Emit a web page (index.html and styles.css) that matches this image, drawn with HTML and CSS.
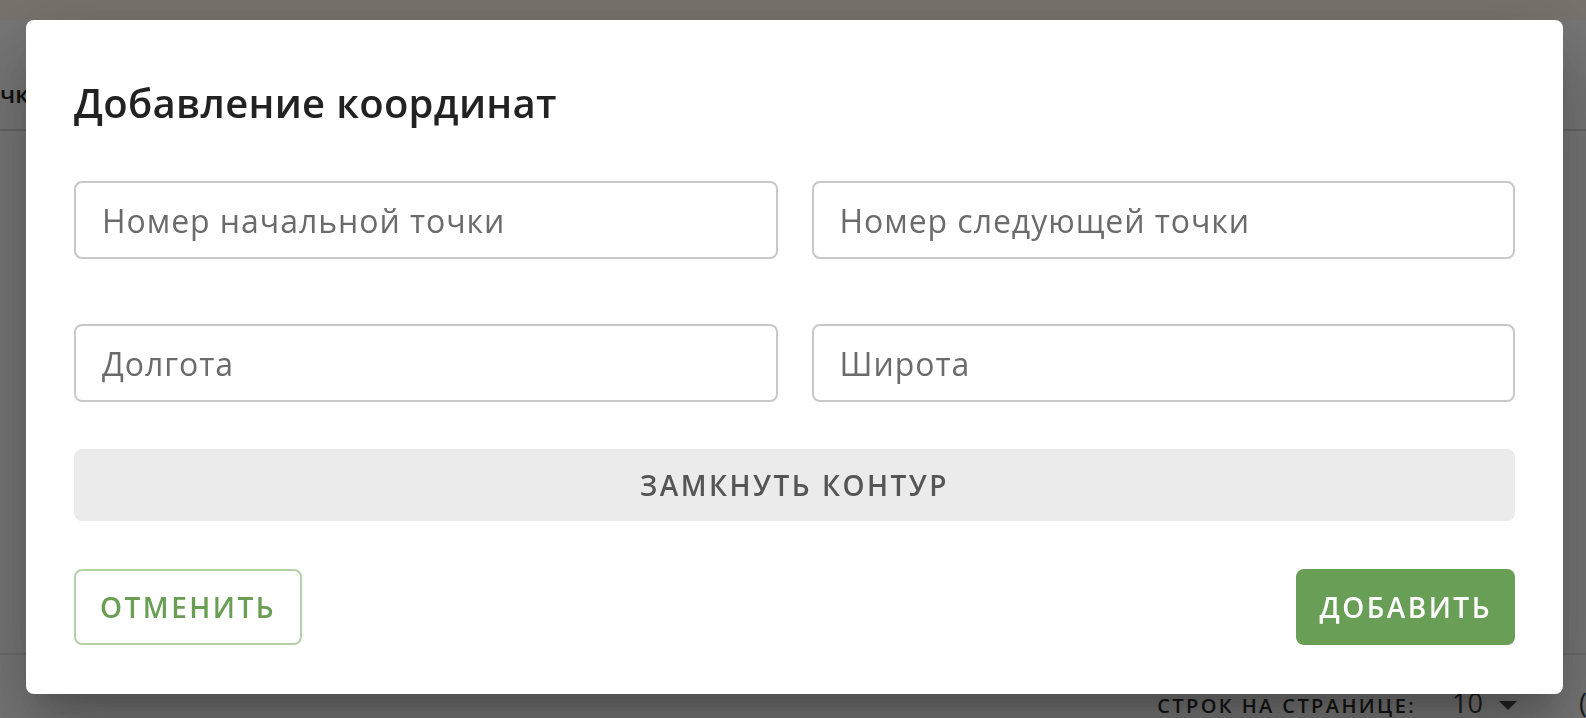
FILE: index.html
```html
<!DOCTYPE html>
<html>
<head>
    <meta charset="utf-8">
    <title>Добавление координат</title>
    <link rel="stylesheet" href="styles.css">
</head>
<body>
    <div class="page">
        <div class="topbar"></div>
        <div class="toolbar"><span class="toolbar-title">чки</span></div>
        <div class="table"></div>
        <div class="pager">
            <span class="pager-label">Строк на странице:</span>
            <span class="pager-value">10</span>
            <span class="pager-arrow"></span>
            <span class="pager-range">(</span>
        </div>
    </div>

    <div class="backdrop">
        <div class="dialog">
            <h2 class="dialog-title">Добавление координат</h2>
            <div class="fields">
                <input class="field" type="text" placeholder="Номер начальной точки">
                <input class="field" type="text" placeholder="Номер следующей точки">
                <input class="field" type="text" placeholder="Долгота">
                <input class="field" type="text" placeholder="Широта">
            </div>
            <button class="btn btn-contour">Замкнуть контур</button>
            <div class="actions">
                <button class="btn btn-outline">Отменить</button>
                <button class="btn btn-primary">Добавить</button>
            </div>
        </div>
    </div>
</body>
</html>
```

FILE: styles.css
```css
html,body{padding:0;margin:0;height:100%;overflow:hidden;}
body{font-family:"Open Sans","Noto Sans",sans-serif;background:#ececec;}

/* page under the dialog */
.page{height:100%;display:flex;flex-direction:column;}
.topbar{height:20px;background:#f0e6d8;}
.toolbar{height:111px;box-sizing:border-box;padding-top:57px;border-bottom:2px solid #cdcdcd;}
.toolbar-title{font-size:24px;font-weight:600;color:#222;}
.table{flex:1;border-bottom:2px solid #d4d4d4;}
.pager{height:63px;box-sizing:border-box;padding-top:29px;display:flex;align-items:baseline;justify-content:flex-end;}
.pager-label{font-size:20px;font-weight:600;letter-spacing:2.4px;text-transform:uppercase;color:#2a2a2a;}
.pager-value{font-size:27px;color:#3a3a3a;margin-left:36px;}
.pager-arrow{align-self:flex-start;width:0;height:0;border-left:9px solid transparent;border-right:9px solid transparent;border-top:9px solid #444;margin:17px 0 0 16px;}
.pager-range{font-size:27px;color:#3a3a3a;margin-left:62px;width:7px;}

/* dialog */
.backdrop{position:fixed;left:0;top:0;right:0;bottom:0;background:rgba(0,0,0,0.5);display:flex;justify-content:flex-start;align-items:flex-start;padding:20px 0 0 26px;}
.dialog{
    width:1537px;
    box-sizing:border-box;
    padding:51px 48px 49px;
    background:#fff;
    border-radius:8px;
    box-shadow:0 22px 30px -14px rgba(0,0,0,0.2),0 48px 76px 6px rgba(0,0,0,0.14),0 18px 92px 16px rgba(0,0,0,0.12);
}
.dialog-title{margin:0 0 46px;font-size:40px;line-height:64px;font-weight:600;letter-spacing:0.3px;color:#222;}

.fields{display:grid;grid-template-columns:1fr 1fr;column-gap:34px;row-gap:65px;}
.field{
    height:78px;
    box-sizing:border-box;
    border:2px solid #c8c8c8;
    border-radius:8px;
    padding:0 26px;
    font-family:inherit;
    font-size:32px;
    letter-spacing:0.95px;
    color:#333;
    outline:none;
}
.field::placeholder{color:#6b6b6b;}

.btn{
    font-family:inherit;
    font-weight:600;
    font-size:28px;
    letter-spacing:2.5px;
    text-transform:uppercase;
    border-radius:8px;
    border:none;
    cursor:pointer;
}
.btn-contour{display:block;width:100%;height:72px;margin-top:47px;background:#ebebeb;color:#555;}
.actions{display:flex;justify-content:space-between;margin-top:48px;}
.btn-outline{height:76px;padding:0 24px;background:#fff;color:#6a9e55;border:2px solid #b4d2a8;}
.btn-primary{height:76px;padding:0 23px;background:#699e56;color:#fff;}
```
